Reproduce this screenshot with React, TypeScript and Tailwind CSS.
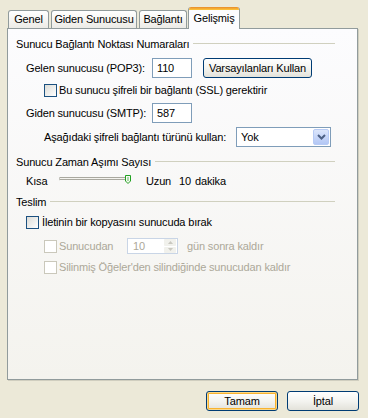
import React from "react";

function Checkbox({ disabled }: { disabled?: boolean }) {
  return (
    <span
      className={
        disabled
          ? "block w-[13px] h-[13px] shrink-0 border border-[#CAC8BB] bg-white"
          : "block w-[13px] h-[13px] shrink-0 border border-[#1C5180] bg-linear-to-br from-[#DCDCD7] to-white"
      }
    />
  );
}

function GroupHeader({ title, className }: { title: string; className?: string }) {
  return (
    <div className={"flex items-center h-[14px] " + (className ?? "")}>
      <span>{title}</span>
      <span className="ml-[4px] flex-1 h-px bg-[#D0D0BF] -mt-[1px]" />
    </div>
  );
}

function XpButton({ label, width, isDefault }: { label: string; width: string; isDefault?: boolean }) {
  return (
    <div
      className={
        "h-[20px] rounded-[3px] border border-[#003C74] bg-linear-to-b from-white via-[#F4F4F0] to-[#E3E2DA] flex items-center justify-center " +
        width +
        (isDefault ? " shadow-[inset_0_0_0_1px_#FBD889,inset_0_0_0_2px_#F8B330]" : "")
      }
    >
      {label}
    </div>
  );
}

function TextBox({ value }: { value: string }) {
  return (
    <div className="w-[40px] h-[20px] border border-[#7F9DB9] bg-white flex items-center pl-[4px]">
      {value}
    </div>
  );
}

export default function App() {
  const tabs = [
    { label: "Genel", w: "w-[41px]", ml: "ml-0" },
    { label: "Giden Sunucusu", w: "w-[86px]", ml: "ml-[2px]" },
    { label: "Bağlantı", w: "w-[48px]", ml: "ml-[2px]" },
  ];

  return (
    <div className="w-[368px] h-[418px] bg-[#ECE9D8] text-[11px] leading-[13px] tracking-[-0.15px] text-black font-['Liberation_Sans',Arial,sans-serif] pt-[7px] overflow-hidden">
      {/* Tabs */}
      <div className="flex items-end h-[21px] pl-[8px]">
        {tabs.map((t) => (
          <div
            key={t.label}
            className={
              "h-[18px] rounded-t-[3px] border border-b-0 border-[#919B9C] bg-linear-to-b from-white to-[#ECEBE6] flex items-center justify-center " +
              t.w +
              " " +
              t.ml
            }
          >
            {t.label}
          </div>
        ))}
        <div className="ml-[1px] w-[52px] h-[22px] -mb-px relative z-10 rounded-t-[3px] overflow-hidden border-x border-[#919B9C] bg-[#FCFCFE] flex flex-col">
          <div className="h-[3px] bg-linear-to-b from-[#E68B2C] to-[#FFC83C]" />
          <div className="flex-1 flex items-center justify-center pb-[2px]">Gelişmiş</div>
        </div>
      </div>

      {/* Panel */}
      <div className="ml-[7px] mr-[10px] h-[352px] border border-[#919B9C] shadow-[1px_1px_0_#D0CEBF] bg-linear-to-b from-[#FCFCFE] to-[#F4F3EE] pl-[8px] pr-[22px] pt-[8px]">
        <GroupHeader title="Sunucu Bağlantı Noktası Numaraları" />

        <div className="mt-[7px] h-[20px] flex items-center pl-[10px]">
          <span className="w-[126px]">Gelen sunucusu (POP3):</span>
          <TextBox value="110" />
          <div className="ml-[11px]">
            <XpButton label="Varsayılanları Kullan" width="w-[109px]" />
          </div>
        </div>

        <div className="mt-[5px] h-[14px] flex items-center pl-[28px]">
          <Checkbox />
          <span className="ml-[2px]">Bu sunucu şifreli bir bağlantı (SSL) gerektirir</span>
        </div>

        <div className="mt-[6px] h-[20px] flex items-center pl-[10px]">
          <span className="w-[126px]">Giden sunucusu (SMTP):</span>
          <TextBox value="587" />
        </div>

        <div className="mt-[4px] h-[20px] flex items-center pl-[28px]">
          <span className="w-[192px]">Aşağıdaki şifreli bağlantı türünü kullan:</span>
          <div className="w-[95px] h-[20px] border border-[#7F9DB9] bg-white flex items-center pl-[4px] pr-[1px]">
            <span className="flex-1">Yok</span>
            <div className="w-[16px] h-[16px] rounded-[2px] border border-[#B7CBF5] bg-linear-to-b from-[#DCE6FB] to-[#B3C7F5] flex items-center justify-center">
              <svg width="9" height="6" viewBox="0 0 9 6">
                <path d="M1 1 L4.5 4.5 L8 1" fill="none" stroke="#4D6185" strokeWidth="2" />
              </svg>
            </div>
          </div>
        </div>

        <GroupHeader title="Sunucu Zaman Aşımı Sayısı" className="mt-[8px]" />

        <div className="mt-[4px] h-[16px] flex items-center pl-[10px]">
          <span className="w-[33px]">Kısa</span>
          <svg width="74" height="16" viewBox="0 0 74 16" className="shrink-0">
            <line x1="0" y1="4.5" x2="0" y2="7.5" stroke="#C6C5BE" />
            <rect x="1" y="4.5" width="70" height="2" fill="#F4F3EE" stroke="#A9A89F" strokeWidth="1" />
            <path d="M66.5 2.5 H71.5 V8 L69 10.5 L66.5 8 Z" fill="#F8F8F4" stroke="#21A121" strokeWidth="1" />
            <line x1="69" y1="4" x2="69" y2="8" stroke="#5BC05B" />
          </svg>
          <span className="ml-[13px]">Uzun</span>
          <span className="ml-[8px]">10</span>
          <span className="ml-[4px]">dakika</span>
        </div>

        <GroupHeader title="Teslim" className="mt-[6px]" />

        <div className="mt-[6px] h-[14px] flex items-center pl-[10px]">
          <Checkbox />
          <span className="ml-[3px]">İletinin bir kopyasını sunucuda bırak</span>
        </div>

        <div className="mt-[9px] h-[16px] flex items-center pl-[28px] text-[#ACA899]">
          <Checkbox disabled />
          <span className="ml-[2px] w-[68px]">Sunucudan</span>
          <div className="w-[51px] h-[16px] border border-[#C9D5E6] bg-white flex items-center pl-[5px] pr-[1px]">
            <span className="flex-1">10</span>
            <div className="w-[12px] h-[14px] flex flex-col gap-px">
              <div className="flex-1 bg-[#F1F1EC] rounded-[1px] flex items-center justify-center">
                <svg width="5" height="3" viewBox="0 0 5 3">
                  <path d="M0 3 L2.5 0 L5 3 Z" fill="#C9C8C0" />
                </svg>
              </div>
              <div className="flex-1 bg-[#F1F1EC] rounded-[1px] flex items-center justify-center">
                <svg width="5" height="3" viewBox="0 0 5 3">
                  <path d="M0 0 L2.5 3 L5 0 Z" fill="#C9C8C0" />
                </svg>
              </div>
            </div>
          </div>
          <span className="ml-[9px]">gün sonra kaldır</span>
        </div>

        <div className="mt-[6px] h-[14px] flex items-center pl-[28px] text-[#ACA899]">
          <Checkbox disabled />
          <span className="ml-[2px]">Silinmiş Öğeler'den silindiğinde sunucudan kaldır</span>
        </div>
      </div>

      {/* Dialog buttons */}
      <div className="mt-[11px] flex justify-end pr-[9px] gap-[9px]">
        <XpButton label="Tamam" width="w-[72px]" isDefault />
        <XpButton label="İptal" width="w-[72px]" />
      </div>
    </div>
  );
}
